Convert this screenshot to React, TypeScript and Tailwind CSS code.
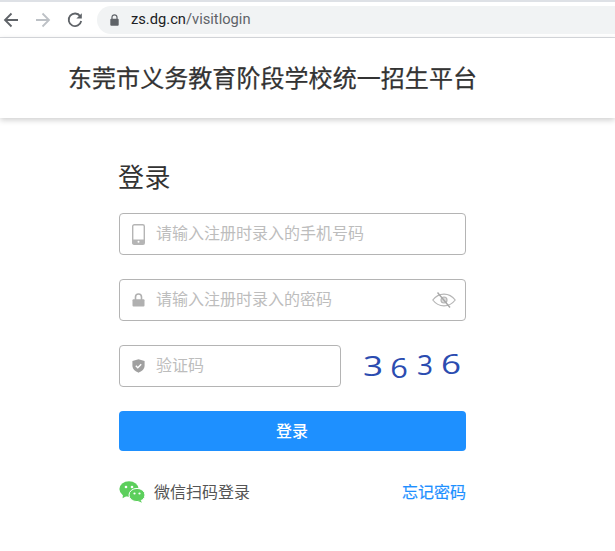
const CJK = "font-['Inter','Noto_Sans_CJK_SC',sans-serif]";

function Back() {
  return (
    <svg width="16" height="16" viewBox="0 0 16 16" fill="none" stroke="#5f6368" strokeWidth="1.8">
      <path d="M15 8H2M8.5 1.5L2 8l6.5 6.5" />
    </svg>
  );
}
function Forward() {
  return (
    <svg width="16" height="16" viewBox="0 0 16 16" fill="none" stroke="#bdc1c6" strokeWidth="1.8">
      <path d="M1 8h13M7.5 1.5L14 8l-6.5 6.5" />
    </svg>
  );
}
function Reload() {
  return (
    <svg width="16" height="16" viewBox="0 0 16 16" fill="none">
      <path d="M13.2 4.2A6.3 6.3 0 1 0 14.2 9" stroke="#5f6368" strokeWidth="1.8" />
      <path d="M14.8 1.2v5.4H9.4z" fill="#5f6368" />
    </svg>
  );
}
function UrlLock() {
  return (
    <svg width="9" height="12" viewBox="0 0 9 12">
      <path d="M2 5V3.3a2.5 2.5 0 0 1 5 0V5" fill="none" stroke="#5f6368" strokeWidth="1.2" />
      <rect x="0.3" y="4.8" width="8.4" height="7" rx="1" fill="#5f6368" />
    </svg>
  );
}
function Phone() {
  return (
    <svg width="13" height="21" viewBox="0 0 13 21">
      <rect x="0.7" y="0.7" width="11.6" height="19.6" rx="1.6" fill="none" stroke="#b5b5b5" strokeWidth="1.4" />
      <rect x="0.7" y="15.5" width="11.6" height="4.8" fill="#b5b5b5" />
      <circle cx="6.5" cy="17.8" r="1" fill="#fff" />
    </svg>
  );
}
function Lock() {
  return (
    <svg width="13" height="14" viewBox="0 0 13 14">
      <path d="M3.5 7V4a3 3 0 0 1 6 0v3" fill="none" stroke="#b0b0b0" strokeWidth="1.6" />
      <rect x="0.5" y="6.2" width="12" height="7.4" rx="1" fill="#b0b0b0" />
    </svg>
  );
}
function Shield() {
  return (
    <svg width="13" height="14" viewBox="0 0 13 14">
      <path d="M6.5 0.3L12.6 2v4.6c0 3.4-2.8 5.9-6.1 7.1C3.2 12.5.4 10 .4 6.6V2z" fill="#a0a0a0" />
      <path d="M3.8 6.7l2 2 3.4-3.4" fill="none" stroke="#fff" strokeWidth="1.4" />
    </svg>
  );
}
function EyeOff() {
  return (
    <svg width="24" height="16" viewBox="0 0 24 16" fill="none" stroke="#b5b5b5" strokeWidth="1.2">
      <path d="M0.8 8C4 3.8 8 2.2 12 2.2S20 3.8 23.2 8C20 12.2 16 13.8 12 13.8S4 12.2.8 8z" />
      <circle cx="12" cy="8" r="3" fill="#dcdcdc" />
      <path d="M5.5 0.5L18 15.5" stroke="#a8a8a8" strokeWidth="1.4" />
    </svg>
  );
}
function WeChat() {
  return (
    <svg width="26" height="22" viewBox="0 0 26 22">
      <ellipse cx="10" cy="8" rx="9.6" ry="7.8" fill="#5ccf5c" />
      <path d="M4 12.5L3.6 17.2 8.5 14.5z" fill="#5ccf5c" />
      <ellipse cx="18" cy="14" rx="8" ry="6.6" fill="#5ccf5c" stroke="#fff" strokeWidth="1" />
      <path d="M21.5 19L23 21.8 19 20z" fill="#5ccf5c" />
      <circle cx="7" cy="6" r="1.3" fill="#fff" />
      <circle cx="13" cy="6" r="1.3" fill="#fff" />
      <circle cx="15.5" cy="12.5" r="1.1" fill="#fff" />
      <circle cx="20.5" cy="12.5" r="1.1" fill="#fff" />
    </svg>
  );
}

function Field({ icon, text, right, className }: { icon: React.ReactNode; text: string; right?: React.ReactNode; className: string }) {
  return (
    <div className={`h-[42px] flex items-center border border-[#b4b4b4] rounded-[4px] bg-white ${className}`}>
      <div className="w-[36px] flex justify-center">{icon}</div>
      <span className="text-[16px] text-[#bdbdbd] leading-none -translate-y-[1px]">{text}</span>
      {right && <div className="ml-auto mr-[9px] flex">{right}</div>}
    </div>
  );
}

export default function App() {
  return (
    <div className={`w-[615px] h-[551px] bg-white overflow-hidden ${CJK}`}>
      <div className="h-[38px] flex items-center border-b border-[#dadce0] border-t-[2px] border-t-[#dee1e6] bg-white">
        <div className="flex items-center gap-[16px] pl-[3px]">
          <Back />
          <Forward />
          <Reload />
        </div>
        <div className="ml-[14px] w-[560px] h-[28px] rounded-full bg-[#f1f3f4] flex items-center pl-[13px] shrink-0">
          <UrlLock />
          <span className="ml-[12px] text-[14.7px] text-[#202124] font-['Roboto',sans-serif]">
            zs.dg.cn<span className="text-[#5f6368]">/visitlogin</span>
          </span>
        </div>
      </div>
      <div className="h-[80px] flex items-center pl-[68px] pt-[2px] shadow-[0_2px_6px_rgba(0,0,0,0.2)]">
        <span className="text-[24px] tracking-[0.06px] text-[#333] [-webkit-text-stroke:0.25px_#333] leading-none">东莞市义务教育阶段学校统一招生平台</span>
      </div>
      <div className="pl-[119px] w-[466px]">
        <h1 className="mt-[43px] text-[26px] leading-[34px] text-[#333] font-normal -ml-[1px] tracking-[0.5px]">登录</h1>
        <div className="mt-[18px] flex flex-col gap-[24px]">
          <Field icon={<Phone />} text="请输入注册时录入的手机号码" className="w-[347px]" />
          <Field icon={<Lock />} text="请输入注册时录入的密码" right={<EyeOff />} className="w-[347px]" />
          <div className="flex items-center">
            <Field icon={<Shield />} text="验证码" className="w-[222px]" />
            <div className="ml-[24px] flex items-center gap-[10px] text-[#2b4cb0] font-['Open_Sans',sans-serif] font-medium text-[28px] leading-none">
              <span className="inline-block scale-x-[1.25] -translate-y-[1px]">3</span>
              <span className="inline-block scale-x-[1.1] translate-y-[1px]">6</span>
              <span className="inline-block -translate-y-[2px]">3</span>
              <span className="inline-block scale-x-[1.25] -translate-y-[3px]">6</span>
            </div>
          </div>
        </div>
        <button className="mt-[24px] w-[347px] h-[40px] rounded-[4px] bg-[#1e90ff] text-white text-[16px] font-medium -indent-[1px]">登录</button>
        <div className="mt-[29px] w-[347px] flex items-center">
          <WeChat />
          <span className="ml-[9px] text-[16px] text-[#555]">微信扫码登录</span>
          <span className="ml-auto text-[16px] text-[#1e90ff] [-webkit-text-stroke:0.2px_#1e90ff]">忘记密码</span>
        </div>
      </div>
    </div>
  );
}
